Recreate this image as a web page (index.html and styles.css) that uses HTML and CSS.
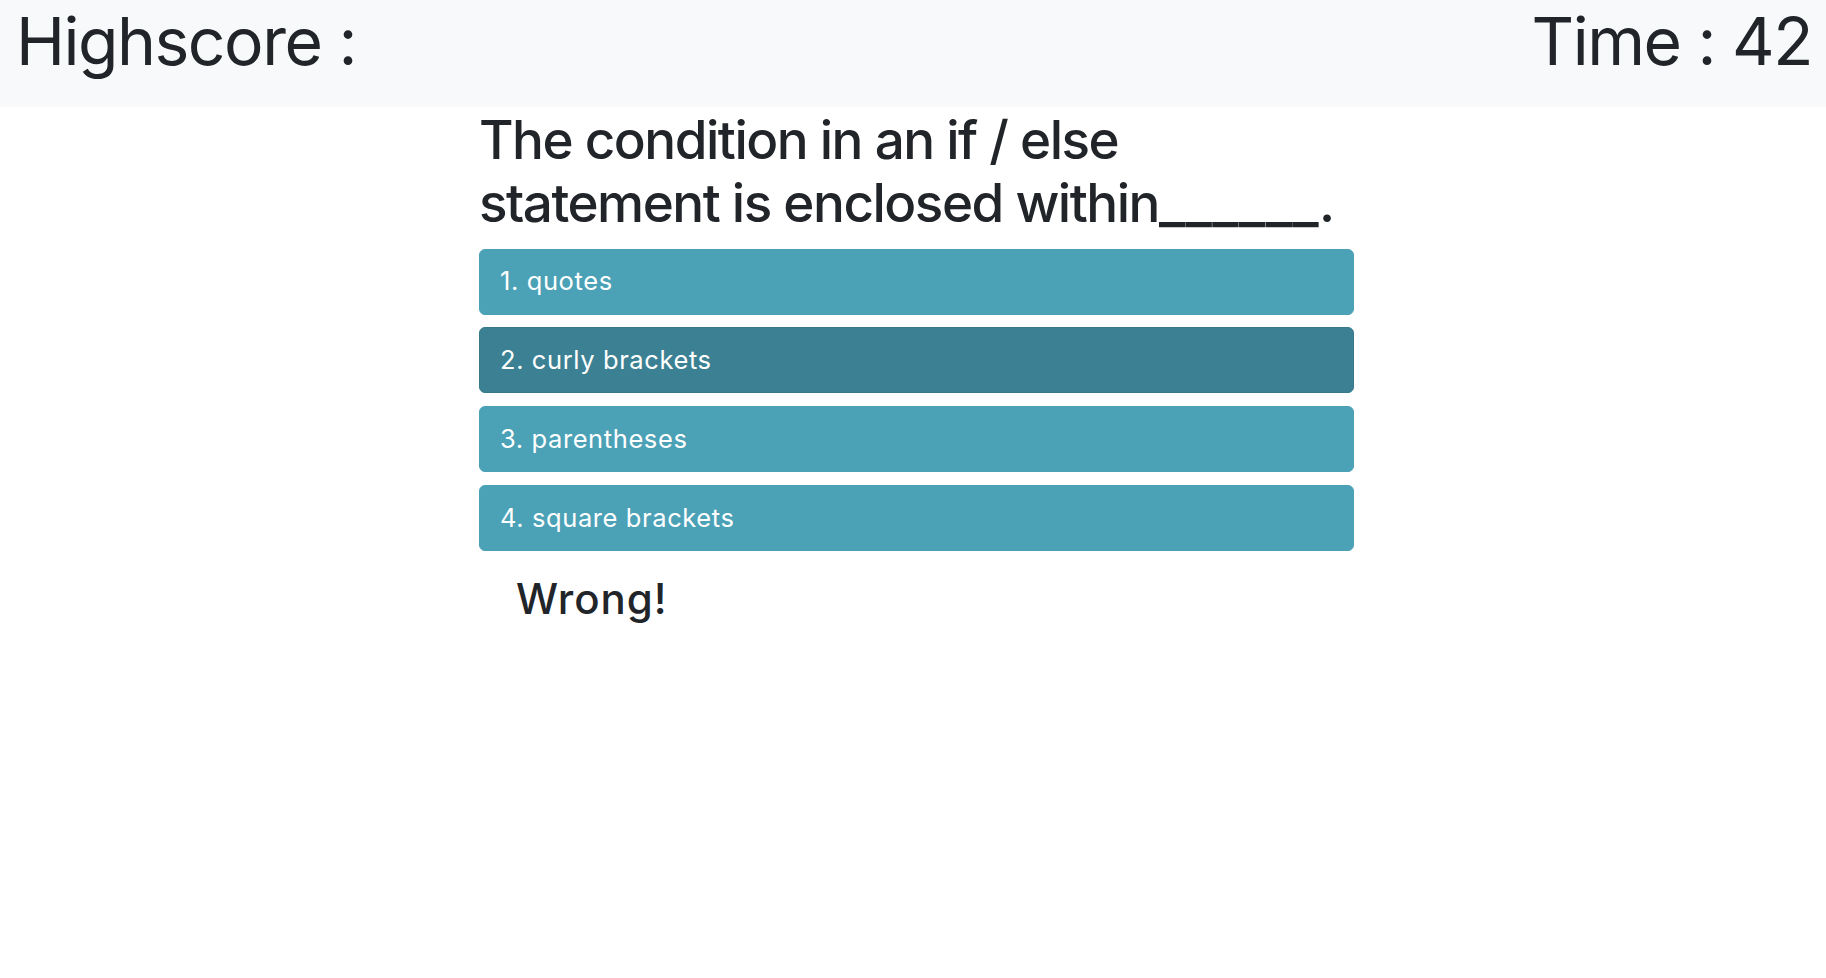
FILE: index.html
```html
<!DOCTYPE html>
<html lang="en">
<head>
<meta charset="utf-8">
<title>Quiz</title>
<link rel="stylesheet" href="styles.css">
</head>
<body>
<header class="topbar">
  <h1 class="topbar-item">Highscore :</h1>
  <h1 class="topbar-item">Time : 42</h1>
</header>
<main class="quiz">
  <h2 class="question">The condition in an if / else statement is enclosed within<span class="blank">______</span>.</h2>
  <div class="answers">
    <button class="answer">1. quotes</button>
    <button class="answer answer-active">2. curly brackets</button>
    <button class="answer">3. parentheses</button>
    <button class="answer">4. square brackets</button>
  </div>
  <p class="feedback">Wrong!</p>
</main>
</body>
</html>
```
FILE: styles.css
```css
* { box-sizing: border-box; }
html, body {
  margin: 0;
  padding: 0;
  background: #ffffff;
  color: #212529;
  font-family: Inter, "Noto Sans", "Liberation Sans", sans-serif;
}
.topbar {
  display: flex;
  justify-content: space-between;
  align-items: flex-start;
  height: 107px;
  padding: 2px 14px 0 16px;
  background: #f8f9fa;
}
.topbar-item {
  margin: 0;
  font-size: 66px;
  font-weight: 400;
  line-height: 1.2;
  letter-spacing: -1.5px;
  color: #212529;
}
.quiz {
  width: 875px;
  margin: 0 0 0 479px;
}
.question {
  margin: 2px 0 13.5px 0;
  font-size: 53px;
  font-weight: 500;
  line-height: 63px;
  letter-spacing: -1.5px;
  color: #212529;
}
.blank {
  font-size: 57px;
  line-height: 1;
  letter-spacing: 0.3px;
}
.answers {
  display: flex;
  flex-direction: column;
  gap: 12.8px;
}
.answer {
  display: block;
  width: 100%;
  height: 66px;
  padding: 0 20px;
  text-align: left;
  font-family: inherit;
  font-size: 25.5px;
  line-height: 1.5;
  letter-spacing: 0.6px;
  color: #ffffff;
  background: #4ba1b6;
  border: 1px solid #4ba1b6;
  border-radius: 6px;
}
.answer-active {
  background: #3b8193;
  border-color: #37788a;
}
.feedback {
  margin: 22.8px 0 0 0;
  padding-left: 37px;
  font-size: 42px;
  font-weight: 500;
  line-height: 1.2;
  letter-spacing: 1px;
  color: #212529;
}
```
